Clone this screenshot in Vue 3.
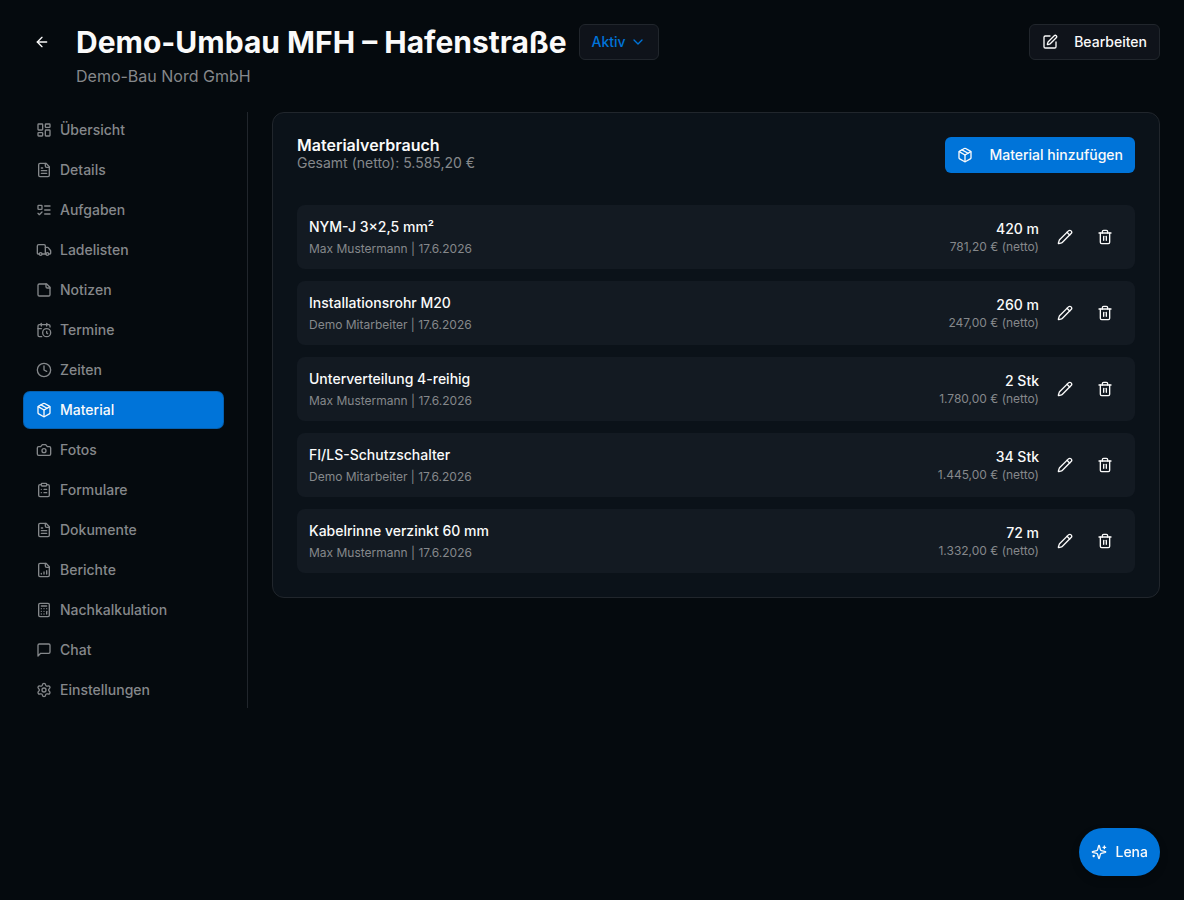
<script setup>
import { ref } from 'vue'

const fileShape = ['M15 2H6a2 2 0 0 0-2 2v16a2 2 0 0 0 2 2h12a2 2 0 0 0 2-2V7Z', 'M14 2v4a2 2 0 0 0 2 2h4']
const fileText = [...fileShape, 'M10 9H8', 'M16 13H8', 'M16 17H8']
const box = [
  'M11 21.73a2 2 0 0 0 2 0l7-4A2 2 0 0 0 21 16V8a2 2 0 0 0-1-1.73l-7-4a2 2 0 0 0-2 0l-7 4A2 2 0 0 0 3 8v8a2 2 0 0 0 1 1.73z',
  'M12 22V12',
  'm3.3 7 8.7 5 8.7-5',
  'm7.5 4.27 9 5.15'
]

const tabs = [
  { label: 'Übersicht', paths: ['M4 3h5a1 1 0 0 1 1 1v7a1 1 0 0 1-1 1H4a1 1 0 0 1-1-1V4a1 1 0 0 1 1-1z', 'M15 3h5a1 1 0 0 1 1 1v3a1 1 0 0 1-1 1h-5a1 1 0 0 1-1-1V4a1 1 0 0 1 1-1z', 'M15 12h5a1 1 0 0 1 1 1v7a1 1 0 0 1-1 1h-5a1 1 0 0 1-1-1v-7a1 1 0 0 1 1-1z', 'M4 16h5a1 1 0 0 1 1 1v3a1 1 0 0 1-1 1H4a1 1 0 0 1-1-1v-3a1 1 0 0 1 1-1z'] },
  { label: 'Details', paths: fileText },
  { label: 'Aufgaben', paths: ['M4 5h4a1 1 0 0 1 1 1v4a1 1 0 0 1-1 1H4a1 1 0 0 1-1-1V6a1 1 0 0 1 1-1z', 'm3 17 2 2 4-4', 'M13 6h8', 'M13 12h8', 'M13 18h8'] },
  { label: 'Ladelisten', paths: ['M14 18V6a2 2 0 0 0-2-2H4a2 2 0 0 0-2 2v11a1 1 0 0 0 1 1h2', 'M15 18H9', 'M19 18h2a1 1 0 0 0 1-1v-3.65a1 1 0 0 0-.22-.624l-3.48-4.35A1 1 0 0 0 17.52 8H14', 'M19 18a2 2 0 1 1-4 0 2 2 0 0 1 4 0z', 'M9 18a2 2 0 1 1-4 0 2 2 0 0 1 4 0z'] },
  { label: 'Notizen', paths: ['M16 3H5a2 2 0 0 0-2 2v14a2 2 0 0 0 2 2h14a2 2 0 0 0 2-2V8Z', 'M15 3v4a2 2 0 0 0 2 2h4'] },
  { label: 'Termine', paths: ['M21 7.5V6a2 2 0 0 0-2-2H5a2 2 0 0 0-2 2v14a2 2 0 0 0 2 2h3.5', 'M16 2v4', 'M8 2v4', 'M3 10h5', 'M17.5 17.5 16 16.3V14', 'M22 16a6 6 0 1 1-12 0 6 6 0 0 1 12 0z'] },
  { label: 'Zeiten', paths: ['M22 12a10 10 0 1 1-20 0 10 10 0 0 1 20 0z', 'M12 6v6l4 2'] },
  { label: 'Material', paths: box },
  { label: 'Fotos', paths: ['M14.5 4h-5L7 7H4a2 2 0 0 0-2 2v9a2 2 0 0 0 2 2h16a2 2 0 0 0 2-2V9a2 2 0 0 0-2-2h-3l-2.5-3z', 'M15 13a3 3 0 1 1-6 0 3 3 0 0 1 6 0z'] },
  { label: 'Formulare', paths: ['M9 2h6a1 1 0 0 1 1 1v2a1 1 0 0 1-1 1H9a1 1 0 0 1-1-1V3a1 1 0 0 1 1-1z', 'M16 4h2a2 2 0 0 1 2 2v14a2 2 0 0 1-2 2H6a2 2 0 0 1-2-2V6a2 2 0 0 1 2-2h2', 'M12 11h4', 'M12 16h4', 'M8 11h.01', 'M8 16h.01'] },
  { label: 'Dokumente', paths: fileText },
  { label: 'Berichte', paths: [...fileShape, 'M8 18v-1', 'M12 18v-3', 'M16 18v-5'] },
  { label: 'Nachkalkulation', paths: ['M6 2h12a2 2 0 0 1 2 2v16a2 2 0 0 1-2 2H6a2 2 0 0 1-2-2V4a2 2 0 0 1 2-2z', 'M8 6h8', 'M16 14v4', 'M16 10h.01', 'M12 10h.01', 'M8 10h.01', 'M12 14h.01', 'M8 14h.01', 'M12 18h.01', 'M8 18h.01'] },
  { label: 'Chat', paths: ['M21 15a2 2 0 0 1-2 2H7l-4 4V5a2 2 0 0 1 2-2h14a2 2 0 0 1 2 2z'] },
  { label: 'Einstellungen', paths: ['M9.671 4.136a2.34 2.34 0 0 1 4.659 0 2.34 2.34 0 0 0 3.319 1.915 2.34 2.34 0 0 1 2.33 4.033 2.34 2.34 0 0 0 0 3.831 2.34 2.34 0 0 1-2.33 4.033 2.34 2.34 0 0 0-3.319 1.915 2.34 2.34 0 0 1-4.659 0 2.34 2.34 0 0 0-3.32-1.915 2.34 2.34 0 0 1-2.33-4.033 2.34 2.34 0 0 0 0-3.831A2.34 2.34 0 0 1 6.35 6.051a2.34 2.34 0 0 0 3.319-1.915', 'M15 12a3 3 0 1 1-6 0 3 3 0 0 1 6 0z'] }
]
const active = ref('Material')

const materials = [
  { name: 'NYM-J 3×2,5 mm²', by: 'Max Mustermann', date: '17.6.2026', amount: '420 m', net: '781,20 €' },
  { name: 'Installationsrohr M20', by: 'Demo Mitarbeiter', date: '17.6.2026', amount: '260 m', net: '247,00 €' },
  { name: 'Unterverteilung 4-reihig', by: 'Max Mustermann', date: '17.6.2026', amount: '2 Stk', net: '1.780,00 €' },
  { name: 'FI/LS-Schutzschalter', by: 'Demo Mitarbeiter', date: '17.6.2026', amount: '34 Stk', net: '1.445,00 €' },
  { name: 'Kabelrinne verzinkt 60 mm', by: 'Max Mustermann', date: '17.6.2026', amount: '72 m', net: '1.332,00 €' }
]
</script>

<template>
  <div class="page">
    <header class="header">
      <button class="icon-button" type="button" aria-label="Zurück">
        <svg class="icon" viewBox="0 0 24 24"><path d="m12 19-7-7 7-7" /><path d="M19 12H5" /></svg>
      </button>
      <div class="heading">
        <div class="title-row">
          <h1>Demo-Umbau MFH – Hafenstraße</h1>
          <button class="outline-button status" type="button" aria-haspopup="menu">
            Aktiv
            <svg class="icon" viewBox="0 0 24 24"><path d="m6 9 6 6 6-6" /></svg>
          </button>
        </div>
        <p class="client">Demo-Bau Nord GmbH</p>
      </div>
      <button class="outline-button spaced" type="button">
        <svg class="icon" viewBox="0 0 24 24">
          <path d="M12 3H5a2 2 0 0 0-2 2v14a2 2 0 0 0 2 2h14a2 2 0 0 0 2-2v-7" />
          <path d="M18.375 2.625a1 1 0 0 1 3 3l-9.013 9.014a2 2 0 0 1-.853.505l-2.873.84a.5.5 0 0 1-.62-.62l.84-2.873a2 2 0 0 1 .506-.852z" />
        </svg>
        Bearbeiten
      </button>
    </header>

    <div class="body">
      <nav class="sidebar" aria-label="Projektbereiche">
        <button
          v-for="tab in tabs"
          :key="tab.label"
          type="button"
          class="tab"
          :class="{ active: tab.label === active }"
          @click="active = tab.label"
        >
          <svg class="icon" viewBox="0 0 24 24"><path v-for="d in tab.paths" :key="d" :d="d" /></svg>
          {{ tab.label }}
        </button>
      </nav>

      <main class="card">
        <div class="card-header">
          <div>
            <h2>Materialverbrauch</h2>
            <p class="total">Gesamt (netto): 5.585,20 €</p>
          </div>
          <button class="primary-button spaced" type="button">
            <svg class="icon" viewBox="0 0 24 24"><path v-for="d in box" :key="d" :d="d" /></svg>
            Material hinzufügen
          </button>
        </div>
        <ul class="list">
          <li v-for="item in materials" :key="item.name" class="row">
            <div class="info">
              <p class="name">{{ item.name }}</p>
              <p class="meta">{{ item.by }} | {{ item.date }}</p>
            </div>
            <div class="amounts">
              <p class="amount">{{ item.amount }}</p>
              <p class="net">{{ item.net }} (netto)</p>
            </div>
            <div class="actions">
              <button class="icon-button" type="button" :aria-label="`${item.name} bearbeiten`">
                <svg class="icon" viewBox="0 0 24 24">
                  <path d="M21.174 6.812a1 1 0 0 0-3.986-3.987L3.842 16.174a2 2 0 0 0-.5.83l-1.321 4.352a.5.5 0 0 0 .623.622l4.353-1.32a2 2 0 0 0 .83-.497z" />
                  <path d="m15 5 4 4" />
                </svg>
              </button>
              <button class="icon-button" type="button" :aria-label="`${item.name} löschen`">
                <svg class="icon" viewBox="0 0 24 24">
                  <path d="M3 6h18" />
                  <path d="M19 6v14a2 2 0 0 1-2 2H7a2 2 0 0 1-2-2V6" />
                  <path d="M8 6V4a2 2 0 0 1 2-2h4a2 2 0 0 1 2 2v2" />
                  <path d="M10 11v6" />
                  <path d="M14 11v6" />
                </svg>
              </button>
            </div>
          </li>
        </ul>
      </main>
    </div>

    <button class="assistant" type="button">
      <svg class="icon" viewBox="0 0 24 24">
        <path d="M9.937 15.5A2 2 0 0 0 8.5 14.063l-6.135-1.582a.5.5 0 0 1 0-.962L8.5 9.936A2 2 0 0 0 9.937 8.5l1.582-6.135a.5.5 0 0 1 .963 0L14.063 8.5A2 2 0 0 0 15.5 9.937l6.135 1.581a.5.5 0 0 1 0 .964L15.5 14.063a2 2 0 0 0-1.437 1.437l-1.582 6.135a.5.5 0 0 1-.963 0z" />
        <path d="M20 3v4" />
        <path d="M22 5h-4" />
        <path d="M4 17v2" />
        <path d="M5 18H3" />
      </svg>
      Lena
    </button>
  </div>
</template>

<style>
body {
  margin: 0;
  background: #050a0e;
}
</style>

<style scoped>
.page {
  box-sizing: border-box;
  min-height: 100vh;
  padding: 24px;
  color: #fafafa;
  font-family: Inter, "Liberation Sans", sans-serif;
  font-size: 14px;
  line-height: 20px;
}
h1, h2, p, ul {
  margin: 0;
  padding: 0;
}
button {
  box-sizing: border-box;
  display: inline-flex;
  align-items: center;
  gap: 8px;
  height: 36px;
  margin: 0;
  padding: 0 12px;
  border: 0;
  border-radius: 6px;
  background: transparent;
  color: inherit;
  font: inherit;
  font-weight: 500;
  white-space: nowrap;
  cursor: pointer;
}
.icon {
  flex: none;
  width: 16px;
  height: 16px;
  fill: none;
  stroke: currentColor;
  stroke-width: 2;
  stroke-linecap: round;
  stroke-linejoin: round;
}
.header {
  display: flex;
  align-items: flex-start;
  gap: 16px;
}
.icon-button {
  flex: none;
  justify-content: center;
  width: 36px;
  padding: 0;
}
.heading {
  flex: 1;
  min-width: 0;
}
.title-row {
  display: flex;
  align-items: center;
  gap: 12px;
}
h1 {
  font-size: 30px;
  font-weight: 700;
  line-height: 36px;
}
.client {
  margin-top: 4px;
  color: #85888b;
  font-size: 16px;
  line-height: 24px;
}
.outline-button {
  border: 1px solid #21262c;
  background: #0f131a;
}
.status {
  gap: 4px;
  color: #0074d9;
}
.spaced {
  gap: 16px;
}
.body {
  display: flex;
  align-items: flex-start;
  gap: 24px;
  margin-top: 24px;
}
.sidebar {
  box-sizing: border-box;
  display: flex;
  flex: none;
  flex-direction: column;
  gap: 4px;
  width: 224px;
  padding-right: 24px;
  border-right: 1px solid #21262c;
}
.tab {
  color: #85888b;
}
.tab.active {
  background: #0074d9;
  box-shadow: 0 0 0 1px #0560b0;
  color: #fafafa;
}
.card {
  flex: 1;
  min-width: 0;
  padding: 24px;
  border: 1px solid #21262c;
  border-radius: 12px;
  background: #0b1219;
}
.card-header {
  display: flex;
  align-items: flex-start;
  justify-content: space-between;
  gap: 16px;
}
h2 {
  font-size: 16px;
  font-weight: 600;
  line-height: 16px;
}
.total {
  color: #85888b;
}
.primary-button {
  background: #0074d9;
}
.list {
  display: flex;
  flex-direction: column;
  gap: 12px;
  margin-top: 32px;
  list-style: none;
}
.row {
  display: flex;
  align-items: center;
  padding: 12px;
  border-radius: 8px;
  background: #131a22;
}
.info {
  flex: 1;
  min-width: 0;
}
.name,
.amount {
  font-weight: 500;
}
.meta,
.net {
  color: #85888b;
  font-size: 12px;
  line-height: 16px;
}
.meta {
  margin-top: 4px;
}
.amounts {
  text-align: right;
}
.actions {
  display: flex;
  gap: 4px;
  margin-left: 8px;
}
.assistant {
  position: fixed;
  right: 24px;
  bottom: 24px;
  height: 48px;
  border-radius: 24px;
  background: #0074d9;
  box-shadow: 0 4px 8px rgba(0, 0, 0, 0.2);
}
</style>
